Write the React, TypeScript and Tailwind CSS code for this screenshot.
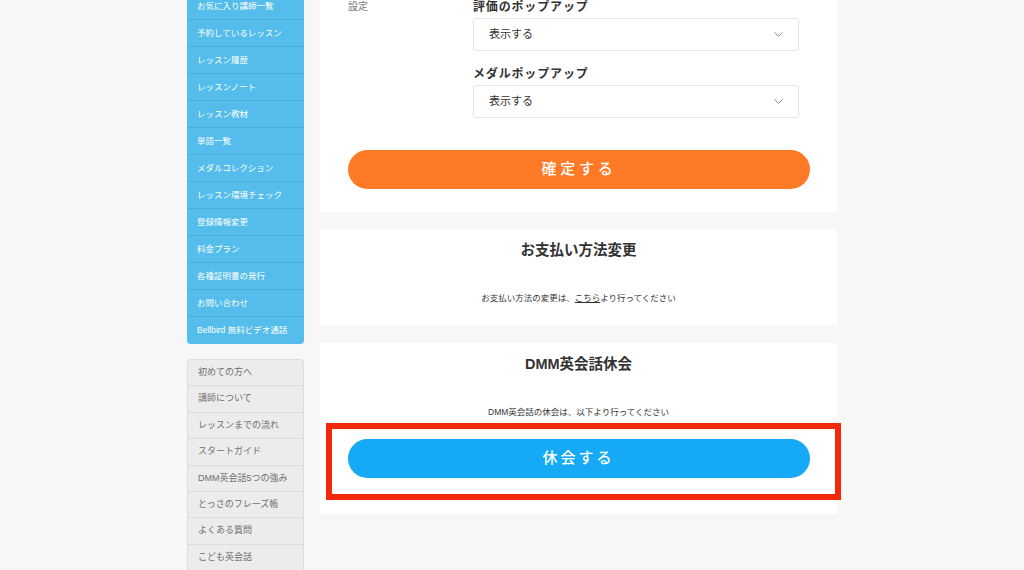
import { ChevronDown } from "lucide-react"

const blueMenu = [
  "お気に入り講師一覧",
  "予約しているレッスン",
  "レッスン履歴",
  "レッスンノート",
  "レッスン教材",
  "単語一覧",
  "メダルコレクション",
  "レッスン環境チェック",
  "登録情報変更",
  "料金プラン",
  "各種証明書の発行",
  "お問い合わせ",
  "Bellbird 無料ビデオ通話",
]

const grayMenu = [
  "初めての方へ",
  "講師について",
  "レッスンまでの流れ",
  "スタートガイド",
  "DMM英会話5つの強み",
  "とっさのフレーズ帳",
  "よくある質問",
  "こども英会話",
]

function Select({ value }: { value: string }) {
  return (
    <div className="flex h-[33px] items-center justify-between rounded-[3px] border border-[#e6e6e6] bg-white pl-[15px] pr-[12px]">
      <span className="text-[11px] text-[#333]">{value}</span>
      <ChevronDown className="h-[15px] w-[15px] text-[#888]" strokeWidth={1.6} />
    </div>
  )
}

export default function App() {
  return (
    <div
      className="h-[570px] overflow-hidden bg-[#f7f7f7]"
      style={{ fontFamily: '"Liberation Sans", "Noto Sans CJK JP", sans-serif' }}
    >
      <div className="mx-auto -mt-[7px] flex w-[650px] items-start gap-[16px]">
        {/* Sidebar */}
        <aside className="w-[117px] shrink-0">
          <ul className="overflow-hidden rounded-b-[4px] bg-[#54bdec]">
            {blueMenu.map((item, i) => (
              <li
                key={item}
                className={
                  "flex h-[27px] items-center pl-[10px] text-[8.5px] text-white " +
                  (i < blueMenu.length - 1 ? "border-b border-[#46aedd]" : "")
                }
              >
                {item}
              </li>
            ))}
          </ul>

          <ul className="mt-[15px] overflow-hidden rounded-t-[4px] border border-[#dcdcdc] bg-[#ececec]">
            {grayMenu.map((item) => (
              <li
                key={item}
                className="flex h-[26.4px] items-center border-b border-[#dcdcdc] pl-[10px] text-[9px] text-[#6f6f6f]"
              >
                {item}
              </li>
            ))}
          </ul>
        </aside>

        {/* Main */}
        <main className="flex w-[517px] flex-col">
          {/* Settings card */}
          <section className="bg-white pl-[28px] pr-[26px] pt-[5px] pb-[23px]">
            <div className="flex">
              <div className="w-[125px] text-[10px] leading-[18px] text-[#777]">設定</div>
              <div className="w-[326px]">
                <div className="text-[12px] font-bold leading-[18px] tracking-[0.07em] text-[#333]">
                  評価のポップアップ
                </div>
                <div className="mt-[2px]">
                  <Select value="表示する" />
                </div>
                <div className="mt-[14px] text-[12px] font-bold leading-[18px] tracking-[0.07em] text-[#333]">
                  メダルポップアップ
                </div>
                <div className="mt-[2px]">
                  <Select value="表示する" />
                </div>
              </div>
            </div>
            <button className="mt-[32px] flex h-[39px] w-[462px] items-center justify-center rounded-full bg-[#ff7a27] text-[15px] font-medium tracking-[0.25em] text-white">
              確定する
            </button>
          </section>

          {/* Payment card */}
          <section className="mt-[17px] flex h-[96px] flex-col items-center bg-white pt-[10px]">
            <h2 className="text-[14.5px] font-bold leading-[22px] text-[#333]">お支払い方法変更</h2>
            <p className="mt-[30px] text-[8.5px] leading-[14px] text-[#333]">
              お支払い方法の変更は、<span className="underline">こちら</span>より行ってください
            </p>
          </section>

          {/* Suspend card */}
          <section className="relative mt-[18px] flex h-[171px] flex-col items-center bg-white pt-[10px]">
            <h2 className="text-[14.5px] font-bold leading-[22px] text-[#333]">DMM英会話休会</h2>
            <p className="mt-[30px] text-[8.5px] leading-[14px] text-[#333]">
              DMM英会話の休会は、以下より行ってください
            </p>
            <button className="mt-[20px] flex h-[39px] w-[462px] items-center justify-center rounded-full bg-[#16a9f5] text-[15px] font-medium tracking-[0.2em] text-white">
              休会する
            </button>
            <div className="pointer-events-none absolute left-[6px] top-[80px] h-[77px] w-[515px] border-[6px] border-[#f2290b]" />
          </section>
        </main>
      </div>
    </div>
  )
}
